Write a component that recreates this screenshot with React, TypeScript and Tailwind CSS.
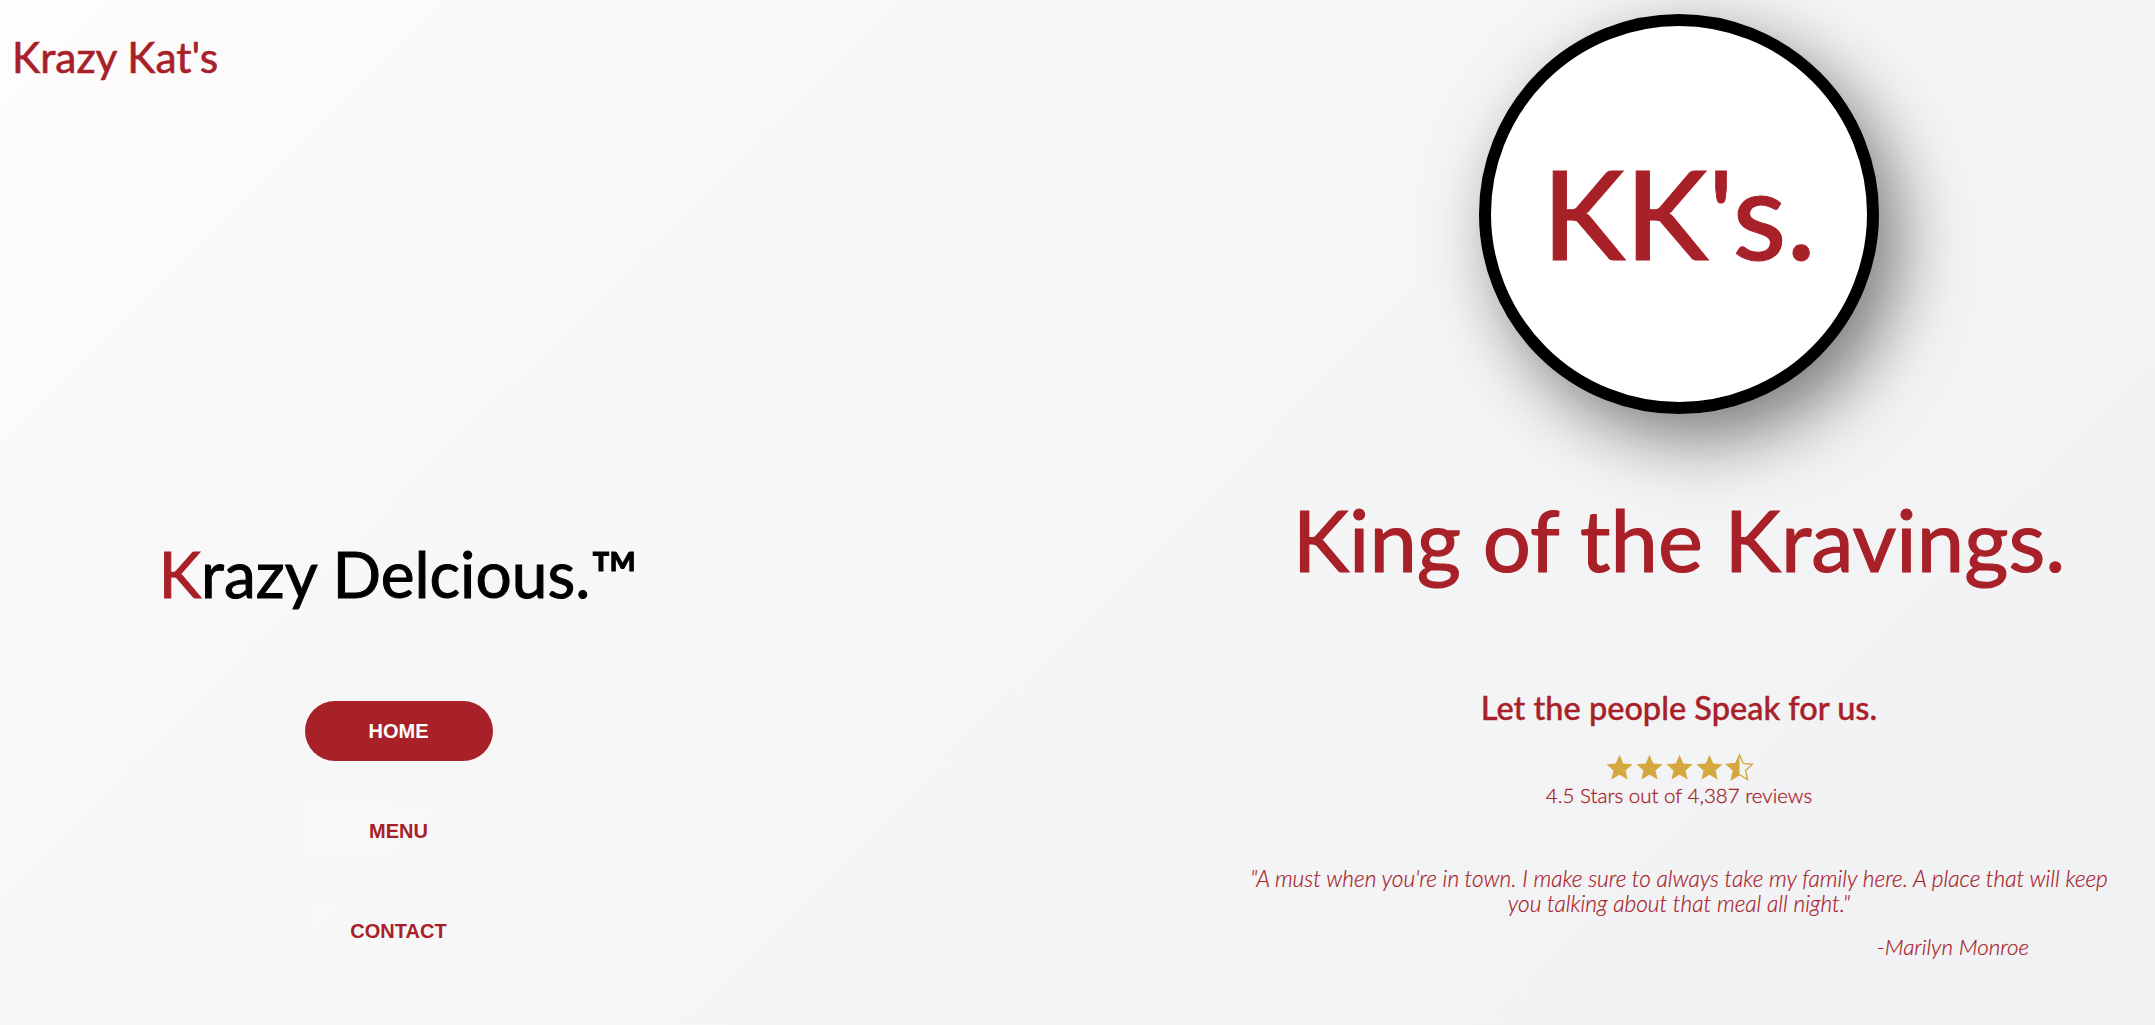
const STAR = 'M12 1.5l3.1 7.1 7.7.7-5.8 5.1 1.7 7.6L12 18l-6.7 4 1.7-7.6-5.8-5.1 7.7-.7z'

function Star({ half = false }: { half?: boolean }) {
  return (
    <svg viewBox="0 0 24 24" className="w-[29px] h-[29px]">
      {half ? (
        <>
          <path d={STAR} fill="none" stroke="#d4a73f" strokeWidth="1.1" />
          <path d="M12 1.5V18l-6.7 4 1.7-7.6-5.8-5.1 7.7-.7z" fill="#d4a73f" />
        </>
      ) : (
        <path d={STAR} fill="#d4a73f" />
      )}
    </svg>
  )
}

function NavButton({ label, active = false }: { label: string; active?: boolean }) {
  return (
    <a
      className={`w-[188px] h-[60px] flex items-center justify-center text-[20px] font-bold font-['Liberation_Sans',sans-serif] ${
        active ? 'rounded-[30px] bg-[#a82028] text-white' : 'bg-white/15 text-[#a82028]'
      }`}
    >
      {label}
    </a>
  )
}

export default function App() {
  return (
    <div className="w-full h-[1025px] overflow-hidden flex justify-between bg-[linear-gradient(135deg,#fffcfd_0%,#f8f8f8_25%,#f0f1f3_100%)] font-['Lato',sans-serif] text-[#a82028]">
      <div className="w-[797px] flex flex-col">
        <div className="pl-3 pt-[30px] text-[42.5px] leading-[54px] h-[527px] [-webkit-text-stroke:0.6px]">Krazy Kat's</div>
        <h2 className="text-center text-[64px] leading-[94px] font-normal text-black [-webkit-text-stroke:1px]">
          <span className="text-[#a82028]">K</span>razy Delcious.™
        </h2>
        <nav className="mt-[80px] flex flex-col items-center gap-10">
          <NavButton label="HOME" active />
          <NavButton label="MENU" />
          <NavButton label="CONTACT" />
        </nav>
      </div>

      <div className="w-[952px] flex flex-col items-center pt-[14px]">
        <div className="w-[400px] h-[400px] shrink-0 rounded-full border-[12px] border-black bg-white shadow-[20px_25px_70px_rgba(0,0,0,0.5)] flex items-center justify-center">
          <span className="text-[124px] leading-none font-medium -mt-1 [-webkit-text-stroke:1px]">KK's.</span>
        </div>
        <h1 className="mt-[70px] text-[85px] leading-[110px] font-normal whitespace-nowrap [-webkit-text-stroke:1.2px]">King of the Kravings.</h1>
        <h3 className="mt-[94px] text-[32.5px] leading-[40px] font-medium [-webkit-text-stroke:0.4px]">Let the people Speak for us.</h3>
        <div className="mt-[25px] flex gap-[1px] h-[29px]">
          <Star />
          <Star />
          <Star />
          <Star />
          <Star half />
        </div>
        <p className="text-[20.5px] leading-[26px] font-light [-webkit-text-stroke:0.3px]">4.5 Stars out of 4,387 reviews</p>
        <p className="mt-[58px] w-[880px] text-center text-[22.7px] leading-[25px] italic font-light [-webkit-text-stroke:0.2px]">
          "A must when you're in town. I make sure to always take my family here. A place that will keep you talking about that meal all night."
        </p>
        <p className="mt-[18px] self-end mr-[126px] text-[22.4px] leading-[26px] italic font-light [-webkit-text-stroke:0.2px]">-Marilyn Monroe</p>
      </div>
    </div>
  )
}
